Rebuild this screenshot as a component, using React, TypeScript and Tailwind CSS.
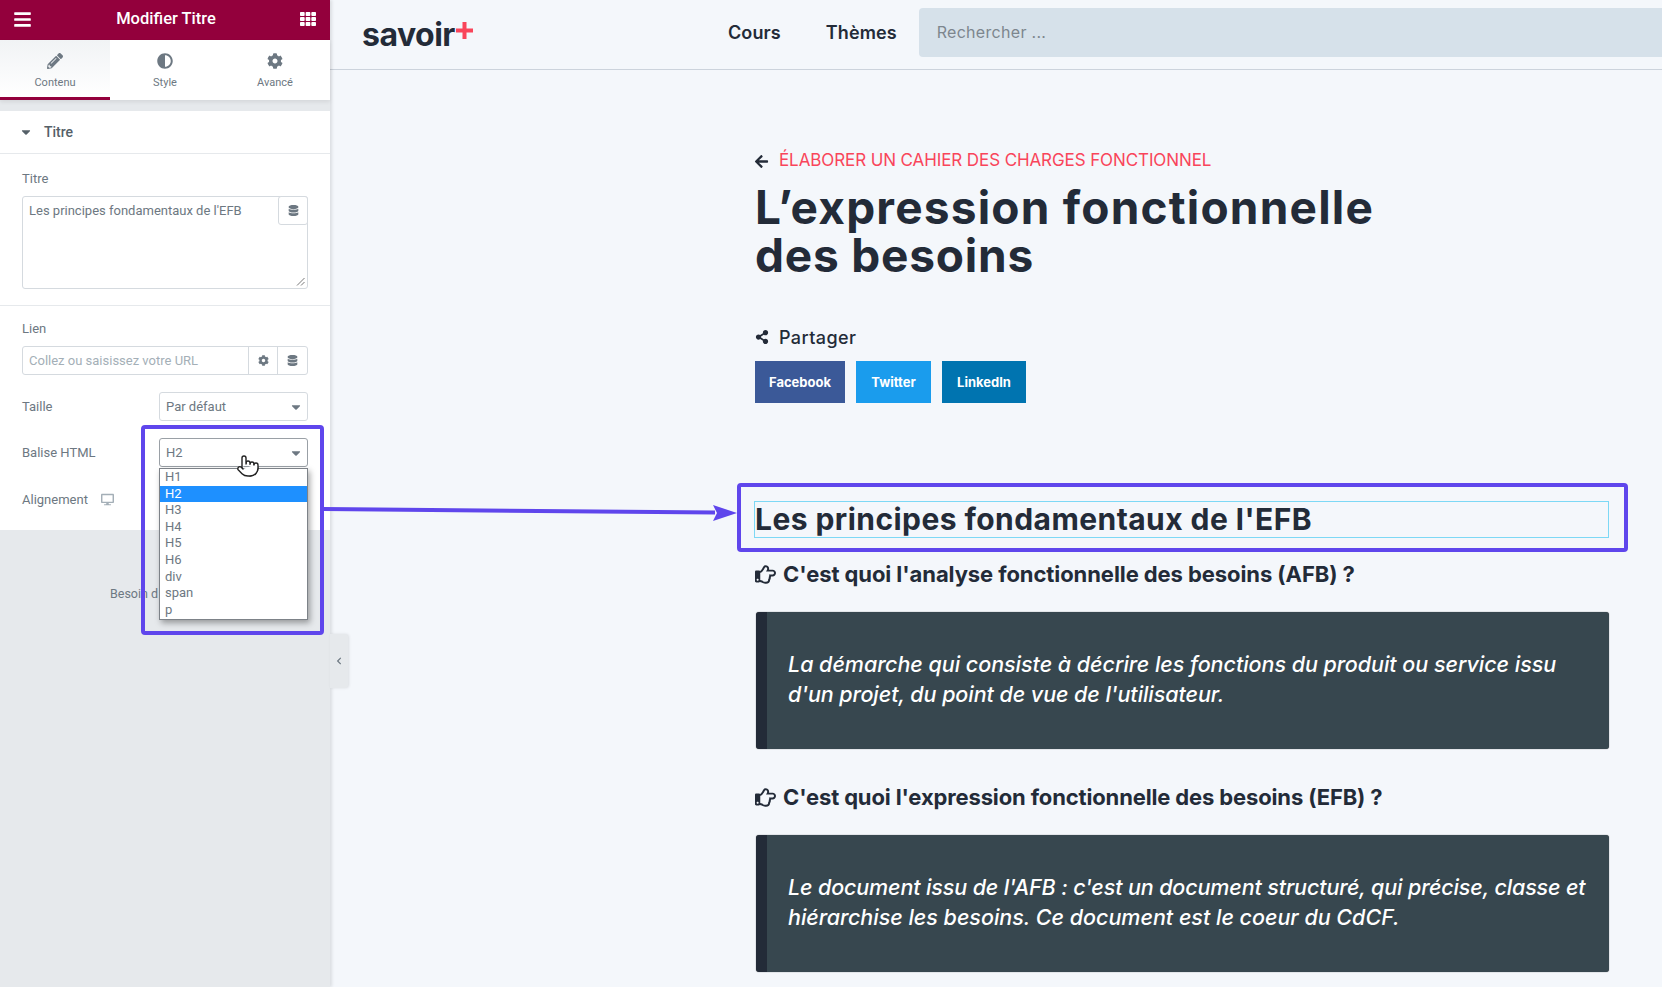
import React from "react";
import {
  FaBars, FaTh, FaPencilAlt, FaAdjust, FaCog, FaCaretDown, FaDatabase, FaDesktop,
  FaChevronLeft, FaArrowLeft, FaShareAlt, FaRegHandPointRight,
} from "react-icons/fa";
import { Pointer } from "lucide-react";

const roboto = "font-['Roboto',sans-serif]";
const inter = "font-['Inter',sans-serif]";

function Tab({ icon, label, active }: { icon: React.ReactNode; label: string; active?: boolean }) {
  return (
    <div className={`flex-1 flex flex-col items-center pt-[12px] h-[60px] border-b-[3px] ${active ? "border-[#93003c] bg-gradient-to-b from-[#f1f3f5] to-white" : "border-white"}`}>
      <div className="h-[18px] text-[16px] text-[#6d7882] flex items-center">{icon}</div>
      <div className="mt-[5px] text-[11px] leading-[16px] text-[#6d7882]">{label}</div>
    </div>
  );
}

function SelectRow({ label, value, dark, className }: { label: string; value: string; dark?: boolean; className: string }) {
  return (
    <div className={`flex items-center justify-between h-[29px] ${className}`}>
      <span className="text-[13px] text-[#6d7882]">{label}</span>
      <div className={`w-[149px] h-full border rounded-[3px] flex items-center justify-between pl-[6px] pr-[4px] text-[13px] text-[#6d7882] bg-white ${dark ? "border-[#9aa0a6]" : "border-[#d5dadf]"}`}>
        <span>{value}</span>
        <FaCaretDown className="text-[14px] text-[#6d7882]" />
      </div>
    </div>
  );
}

function Sidebar() {
  return (
    <aside className={`relative w-[330px] shrink-0 h-full bg-[#e6e9ec] shadow-[2px_0_3px_rgba(0,0,0,0.1)] z-10 ${roboto}`}>
      <div className="h-[40px] bg-[#93003c] text-white flex items-center justify-between pl-[13px] pr-[14px] pb-[2px]">
        <FaBars className="text-[19px]" />
        <span className="text-[16.5px] font-medium">Modifier Titre</span>
        <FaTh className="text-[16px]" />
      </div>
      <div className="flex bg-white shadow-[0_2px_4px_rgba(0,0,0,0.08)] relative">
        <Tab icon={<FaPencilAlt />} label="Contenu" active />
        <Tab icon={<FaAdjust />} label="Style" />
        <Tab icon={<FaCog />} label="Avancé" />
      </div>
      <div className="mt-[11px] bg-white h-[419px]">
        <div className="h-[43px] border-b border-[#e6e9ec] flex items-center pl-[19px]">
          <FaCaretDown className="text-[14px] text-[#556068]" />
          <span className="ml-[11px] text-[14px] font-medium text-[#556068]">Titre</span>
        </div>
        <div className="px-[22px] pt-[17px] h-[152px] border-b border-[#e6e9ec]">
          <div className="text-[13px] leading-[16px] text-[#6d7882]">Titre</div>
          <div className="relative mt-[9px] h-[93px] border border-[#d5dadf] rounded-[3px] pl-[6px] pt-[6px] text-[13px] leading-[16px] text-[#6d7882]">
            Les principes fondamentaux de l'EFB
            <div className="absolute right-[-1px] top-[-1px] w-[30px] h-[29px] border border-[#d5dadf] rounded-[3px] flex items-center justify-center text-[11px] text-[#6d7882] bg-white">
              <FaDatabase />
            </div>
            <svg className="absolute right-[2px] bottom-[2px]" width="9" height="9" viewBox="0 0 9 9">
              <path d="M1 8.5 8.5 1M5 8.5 8.5 5" stroke="#555" strokeWidth="0.8" />
            </svg>
          </div>
        </div>
        <div className="px-[22px] pt-[15px]">
          <div className="text-[13px] leading-[16px] text-[#6d7882]">Lien</div>
          <div className="mt-[9px] h-[29px] border border-[#d5dadf] rounded-[3px] flex items-center text-[13px]">
            <span className="flex-1 pl-[6px] text-[#a4afb7]">Collez ou saisissez votre URL</span>
            <span className="w-[29px] h-full border-l border-[#d5dadf] flex items-center justify-center text-[#6d7882] text-[11px]"><FaCog /></span>
            <span className="w-[30px] h-full border-l border-[#d5dadf] flex items-center justify-center text-[#6d7882] text-[11px]"><FaDatabase /></span>
          </div>
          <SelectRow className="mt-[17px]" label="Taille" value="Par défaut" />
          <SelectRow className="mt-[17px]" label="Balise HTML" value="H2" dark />
          <div className="mt-[23px] flex items-center text-[13px] text-[#6d7882]">
            <span>Alignement</span>
            <FaDesktop className="ml-[13px] text-[13px] text-[#a4afb7]" />
          </div>
        </div>
      </div>
      <div className="absolute left-[110px] top-[586px] text-[12.5px] leading-[16px] text-[#6d7882]">Besoin d</div>
      <div className="absolute left-[330px] top-[634px] w-[18px] h-[54px] bg-[#e6e9ec] rounded-r-[3px] shadow-[1px_0_3px_rgba(0,0,0,0.1)] flex items-center justify-center text-[#6d7882] text-[8px]">
        <FaChevronLeft />
      </div>
    </aside>
  );
}

function Heading({ children, tracking }: { children: string; tracking: string }) {
  return (
    <div className="flex items-center h-[34px] text-[#232b38]">
      <FaRegHandPointRight className="text-[21px] shrink-0" />
      <h3 className={`ml-[7px] text-[22px] font-bold ${tracking}`}>{children}</h3>
    </div>
  );
}

function Callout({ line1, line2, tracking1, tracking2 }: { line1: string; line2: string; tracking1: string; tracking2: string }) {
  return (
    <div className="ml-[1px] h-[137px] bg-[#37474f] border-l-[11px] border-[#232b38] rounded-[3px] shadow-[0_0_1px_rgba(0,0,0,0.7)] pl-[21px] pt-[37px] text-white italic font-medium text-[21.5px] leading-[30px]">
      <p className={`whitespace-nowrap ${tracking1}`}>{line1}</p>
      <p className={`whitespace-nowrap ${tracking2}`}>{line2}</p>
    </div>
  );
}

function Main() {
  return (
    <main className={`flex-1 min-w-0 h-full bg-[#f4f7fb] text-[#232b38] ${inter}`}>
      <header className="h-[70px] border-b border-[#ccd3dc] flex items-center">
        <div className="relative ml-[32px] w-[366px] text-[32px] font-bold text-[#232b38] tracking-[-0.5px]">
          savoir
          <svg className="absolute left-[94px] top-[11px]" width="17" height="17" viewBox="0 0 17 17">
            <path d="M6.5 0h4v6.5H17v4h-6.5V17h-4v-6.5H0v-4h6.5z" fill="#f9455a" />
          </svg>
        </div>
        <span className="text-[18px] font-semibold pb-[4px] tracking-[0.1px]">Cours</span>
        <span className="ml-[45px] text-[18px] font-semibold pb-[4px] tracking-[0.1px]">Thèmes</span>
        <div className="ml-[22px] flex-1 h-[49px] bg-[#d6e1ea] rounded-l-[4px] flex items-center pl-[18px] text-[16px] text-[#7d868e] mb-[6px] mt-[1px] tracking-[0.3px]">
          Rechercher ...
        </div>
      </header>
      <div className="pl-[425px] w-[1279px] pt-[79px]">
        <div className="flex items-center h-[24px]">
          <FaArrowLeft className="text-[15px] text-[#232b38] ml-[-1px]" />
          <span className="ml-[10px] text-[17px] text-[#f9455a] uppercase tracking-[-0.1px]">Élaborer un cahier des charges fonctionnel</span>
        </div>
        <h1 className="mt-[10px] text-[46px] leading-[48px] font-bold tracking-[1.2px]">
          L’expression fonctionnelle<br /><span className="tracking-[0.8px]">des besoins</span>
        </h1>
        <div className="mt-[44px] flex items-center h-[28px]">
          <FaShareAlt className="text-[14px]" />
          <span className="ml-[10px] text-[18px] font-medium tracking-[0.4px]">Partager</span>
        </div>
        <div className="mt-[10px] flex gap-[11px] text-white text-[13px] font-bold">
          <div className="h-[42px] w-[90px] pt-[1px] bg-[#3b5998] flex items-center justify-center">Facebook</div>
          <div className="h-[42px] w-[75px] pt-[1px] bg-[#1a9ced] flex items-center justify-center">Twitter</div>
          <div className="h-[42px] w-[84px] pt-[1px] bg-[#0074b0] flex items-center justify-center">LinkedIn</div>
        </div>
        <h2 className="mt-[98px] ml-[-1px] h-[37px] border border-[#7dd8f5] text-[30px] leading-[35px] font-bold tracking-[0.44px]">
          Les principes fondamentaux de l'EFB
        </h2>
        <div className="mt-[19px]"><Heading tracking="tracking-[-0.08px]">C'est quoi l'analyse fonctionnelle des besoins (AFB) ?</Heading></div>
        <div className="mt-[21px]">
          <Callout
            tracking1="tracking-[-0.03px]"
            tracking2="tracking-[-0.06px]"
            line1="La démarche qui consiste à décrire les fonctions du produit ou service issu"
            line2="d'un projet, du point de vue de l'utilisateur."
          />
        </div>
        <div className="mt-[31px]"><Heading tracking="tracking-[-0.14px]">C'est quoi l'expression fonctionnelle des besoins (EFB) ?</Heading></div>
        <div className="mt-[21px]">
          <Callout
            tracking1="tracking-[-0.13px]"
            tracking2="tracking-[-0.01px]"
            line1="Le document issu de l'AFB : c'est un document structuré, qui précise, classe et"
            line2="hiérarchise les besoins. Ce document est le coeur du CdCF."
          />
        </div>
      </div>
    </main>
  );
}

function Overlays() {
  const options = ["H1", "H2", "H3", "H4", "H5", "H6", "div", "span", "p"];
  return (
    <div className="contents">
      <div className={`absolute z-20 left-[159px] top-[468px] w-[149px] h-[152px] bg-white border border-[#7d8288] shadow-[2px_3px_6px_rgba(0,0,0,0.35)] text-[13px] leading-[16.5px] text-[#6d7882] ${roboto}`}>
        {options.map((o) => (
          <div key={o} className={`pl-[5px] h-[16.6px] ${o === "H2" ? "bg-[#1e90ff] text-white" : ""}`}>{o}</div>
        ))}
      </div>
      <div className="absolute z-20 left-[141px] top-[425px] w-[183px] h-[210px] border-[4px] border-[#5f46ec] rounded-[4px]" />
      <div className="absolute z-20 left-[737px] top-[483px] w-[891px] h-[69px] border-[4px] border-[#5f46ec] rounded-[4px]" />
      <svg className="absolute z-20 left-[320px] top-[500px]" width="420" height="24" viewBox="0 0 420 24">
        <path d="M4 9 395 12.5" stroke="#5f46ec" strokeWidth="4" fill="none" />
        <path d="M417 13 393 5l4 8-4 8z" fill="#5f46ec" />
      </svg>
      <Pointer className="absolute z-20 left-[236px] top-[454px] text-[#222]" size={24} strokeWidth={1.4} fill="#fff" />
    </div>
  );
}

export default function App() {
  return (
    <div className="relative flex w-[1662px] h-[987px] overflow-hidden">
      <Sidebar />
      <Main />
      <Overlays />
    </div>
  );
}
